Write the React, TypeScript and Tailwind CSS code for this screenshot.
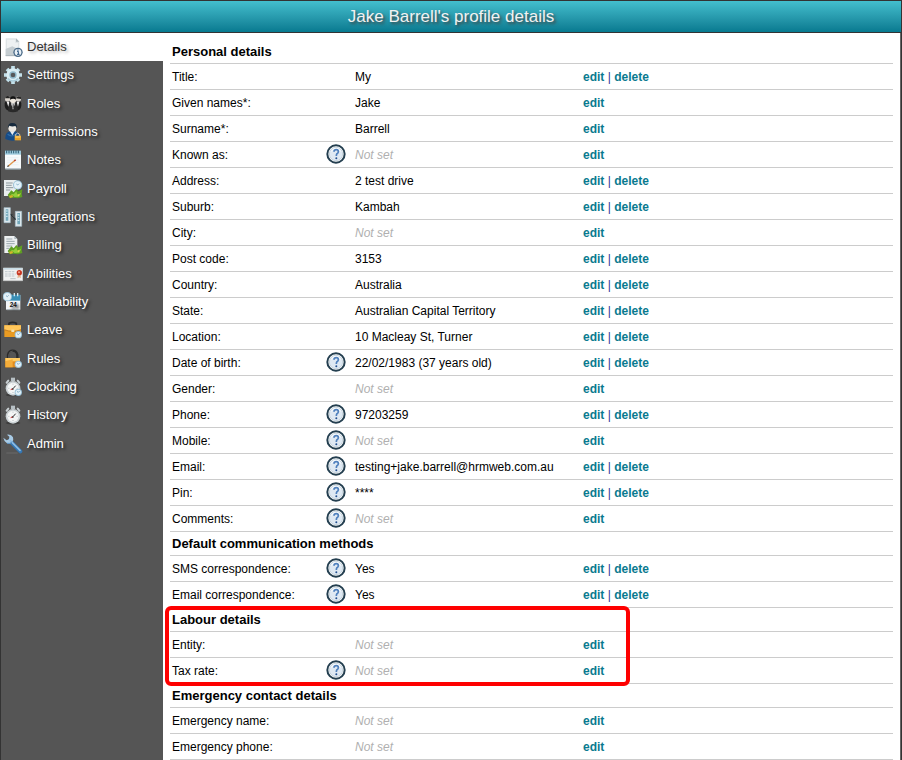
import { ReactNode } from 'react';
import clsx from 'clsx';

interface Field {
  label: string;
  value?: string;
  required?: boolean;
  help?: boolean;
  canDelete?: boolean;
}

interface Section {
  title: string;
  highlighted?: boolean;
  fields: Field[];
}

const sections: Section[] = [
  {
    title: 'Personal details',
    fields: [
      { label: 'Title', value: 'My', canDelete: true },
      { label: 'Given names', value: 'Jake', required: true },
      { label: 'Surname', value: 'Barrell', required: true },
      { label: 'Known as', help: true },
      { label: 'Address', value: '2 test drive', canDelete: true },
      { label: 'Suburb', value: 'Kambah', canDelete: true },
      { label: 'City' },
      { label: 'Post code', value: '3153', canDelete: true },
      { label: 'Country', value: 'Australia', canDelete: true },
      { label: 'State', value: 'Australian Capital Territory', canDelete: true },
      { label: 'Location', value: '10 Macleay St, Turner', canDelete: true },
      { label: 'Date of birth', value: '22/02/1983 (37 years old)', help: true, canDelete: true },
      { label: 'Gender' },
      { label: 'Phone', value: '97203259', help: true, canDelete: true },
      { label: 'Mobile', help: true },
      { label: 'Email', value: 'testing+jake.barrell@hrmweb.com.au', help: true, canDelete: true },
      { label: 'Pin', value: '****', help: true, canDelete: true },
      { label: 'Comments', help: true },
    ],
  },
  {
    title: 'Default communication methods',
    fields: [
      { label: 'SMS correspondence', value: 'Yes', help: true, canDelete: true },
      { label: 'Email correspondence', value: 'Yes', help: true, canDelete: true },
    ],
  },
  {
    title: 'Labour details',
    highlighted: true,
    fields: [{ label: 'Entity' }, { label: 'Tax rate', help: true }],
  },
  {
    title: 'Emergency contact details',
    fields: [{ label: 'Emergency name' }, { label: 'Emergency phone' }],
  },
];

/* Small clock overlay used by several icons */
function MiniClock({ x, y, r = 11 }: { x: number; y: number; r?: number }) {
  return (
    <g>
      <circle cx={x} cy={y} r={r} fill="#9dc3d8" />
      <circle cx={x} cy={y} r={r - 3} fill="#e3f1f8" />
      <path d={`M${x - 4} ${y - 3}L${x} ${y}L${x + 4} ${y - 4}`} fill="none" stroke="#5b8fae" strokeWidth="2" />
    </g>
  );
}

function Stopwatch() {
  return (
    <g>
      <ellipse cx="30" cy="54" rx="22" ry="4" fill="#3d3d3d" />
      <path d="M11 17l5-6M49 17l-5-6" stroke="#c9d0d3" strokeWidth="6" strokeLinecap="round" />
      <path d="M24 2h12v10H24z" fill="#b7c0c4" />
      <circle cx="30" cy="34" r="22" fill="#cbd2d5" />
      <circle cx="30" cy="34" r="17" fill="#f4f6f6" />
      <path d="M30 20v3M30 45v3M16 34h3M41 34h3" stroke="#9aa5aa" strokeWidth="2" />
      <path d="M30 35l8-9" stroke="#333" strokeWidth="3" />
      <circle cx="29" cy="36" r="3" fill="#4b4b4b" />
      <path d="M28 36l-5 2" stroke="#d33" strokeWidth="3" />
    </g>
  );
}

function Leaves() {
  return (
    <g>
      <path d="M14 48l11-14 7 6 8-10 6 7 12-6-2 14 2 9-14 4-12-2-12 2z" fill="#5f9f22" />
      <path d="M22 44l10 2 8-9 3 11 12-7-6 12-14 1z" fill="#94cf38" />
      <path d="M18 50l10-2 2 6-9 3z" fill="#d7b32c" />
      <path d="M42 47l8-2-3 7z" fill="#e9d24a" />
    </g>
  );
}

const icons: Record<string, ReactNode> = {
  Details: (
    <>
      <path d="M8 4h31l10 10v42H8z" fill="#dfe4e6" />
      <path d="M12 8h25v10h8v16H12z" fill="#eef1f2" />
      <path d="M8 36l20-8 21 10v18H8z" fill="#c5cdd1" />
      <path d="M39 4v10h10z" fill="#aeb8bd" />
      <path d="M8 56h30" stroke="#a9b4b9" strokeWidth="3" />
      <circle cx="45" cy="46" r="14" fill="#4b6b88" />
      <circle cx="45" cy="46" r="10" fill="#e9f0f6" />
      <path d="M42 43h4v9M42 52h8" fill="none" stroke="#29537f" strokeWidth="3" />
      <circle cx="45" cy="39" r="2" fill="#29537f" />
    </>
  ),
  Settings: (
    <>
      <g stroke="#c3e0ea" strokeWidth="11">
        <path d="M30 3v54M3 30h54M12 12l36 36M48 12L12 48" />
      </g>
      <circle cx="30" cy="30" r="20" fill="#d9edf4" />
      <path d="M15 40a18 18 0 0 0 30 0" fill="none" stroke="#a5cbda" strokeWidth="4" />
      <circle cx="30" cy="30" r="11" fill="#8fb8c9" />
      <circle cx="30" cy="30" r="7" fill="#55585a" />
    </>
  ),
  Roles: (
    <>
      <path d="M5 28q1-9 12-8l8 6v23H13q-9-5-8-21zM55 28q-1-9-12-8l-8 6v23h12q9-5 8-21z" fill="#1d1d1d" />
      <path d="M17 32q2-8 13-8t13 8l2 20q-15 6-30 0z" fill="#292929" />
      <circle cx="14" cy="15" r="8" fill="#d9d4cd" />
      <circle cx="46" cy="15" r="8" fill="#d9d4cd" />
      <path d="M6 13q2-9 10-7l7 7zM38 13q7-11 16-3v5z" fill="#242424" />
      <path d="M11 23h8l-3 15zM41 23h8l-4 15z" fill="#eee" />
      <circle cx="30" cy="19" r="9" fill="#eee8df" />
      <path d="M21 17q0-11 10-10 8 1 8 10-8-5-18 0z" fill="#111" />
      <path d="M24 28h12l-6 19z" fill="#fff" />
      <path d="M29 29h3l1 11-3 4-2-4z" fill="#555" />
    </>
  ),
  Permissions: (
    <>
      <path d="M7 47q0-16 15-19h13q13 4 14 18v6q-21 9-42-1z" fill="#164c88" />
      <path d="M14 37q12 10 26-1" stroke="#2f6ca8" strokeWidth="4" fill="none" />
      <path d="M21 28h14l-7 12z" fill="#e7edf2" />
      <circle cx="28" cy="18" r="12" fill="#ece8e2" />
      <path d="M15 19Q14 3 28 3q15 0 14 16l-5-7q-10 3-18-1z" fill="#172a3d" />
      <path d="M38 42v-5q6-7 12 0v5" fill="none" stroke="#c7c7c7" strokeWidth="3" />
      <path d="M35 41h19v14H35z" fill="#eaa32b" />
      <path d="M37 43h15v4H37z" fill="#ffd067" />
    </>
  ),
  Notes: (
    <>
      <path d="M6 5h48v51H6z" fill="#f7fafb" />
      <path d="M6 2h48v12H6z" fill="#9dcbdd" />
      <path d="M11 1v9M18 1v9M25 1v9M32 1v9M39 1v9M46 1v9" stroke="#315d72" strokeWidth="3" />
      <path d="M12 23h35M12 30h35M12 37h35M12 44h35" stroke="#e6eff3" strokeWidth="2" />
      <path d="M7 57h46" stroke="#b2c7d0" strokeWidth="3" />
      <path d="M16 48l21-18" stroke="#e0964c" strokeWidth="4" />
      <path d="M34 33l4-4" stroke="#b63d30" strokeWidth="4" />
      <path d="M12 51l3-6 4 4z" fill="#333" />
    </>
  ),
  Payroll: (
    <>
      <path d="M3 3h38v48H3z" fill="#e9edee" />
      <path d="M9 12h20M9 19h17M9 26h22M9 33h13" stroke="#8b979c" strokeWidth="3" />
      <MiniClock x={44} y={18} r={14} />
      <Leaves />
    </>
  ),
  Integrations: (
    <>
      <path d="M3 2h19v45H3zM37 13h19v45H37z" fill="#dce8ed" stroke="#a8bec8" strokeWidth="2" />
      <path d="M8 7h8v34H8zM43 18h8v34h-8z" fill="#73a8bb" />
      <path d="M9 12h5M9 20h5M9 28h5M44 24h5M44 32h5M44 40h5" stroke="#d9edf4" strokeWidth="3" />
      <path d="M24 24l6 6 7 6" fill="none" stroke="#293438" strokeWidth="3" />
      <path d="M22 20l8 3-5 5zM39 39l-8-3 5-5z" fill="#293438" />
    </>
  ),
  Billing: (
    <>
      <path d="M4 3h30l9 9v42H4z" fill="#edf0f1" />
      <path d="M34 3v9h9z" fill="#aeb9be" />
      <path d="M10 12h18M10 19h25M10 26h25M10 33h18M10 40h10" stroke="#9ba7ac" strokeWidth="3" />
      <Leaves />
    </>
  ),
  Abilities: (
    <>
      <path d="M1 12h58v38H1z" fill="#f0f1f1" stroke="#d2d5d5" strokeWidth="2" />
      <path d="M2 12h56v5H2z" fill="#c9dce5" />
      <path d="M6 23h29M6 30h32M6 36h28" stroke="#a8b4ba" strokeWidth="2" strokeDasharray="8 2" />
      <path d="M22 44h16" stroke="#bac2c5" strokeWidth="3" />
      <path d="M45 30l-2 13 6-3 5 3-2-13z" fill="#e3b894" />
      <circle cx="49" cy="26" r="8" fill="#c73723" />
      <circle cx="48" cy="25" r="3" fill="#f2a28c" />
    </>
  ),
  Availability: (
    <>
      <path d="M9 9h43v44H9z" fill="#f3f6f8" />
      <path d="M9 8h43v18H9z" fill="#398eb5" />
      <path d="M34 3v10M44 3v10" stroke="#d5e7ef" strokeWidth="4" />
      <MiniClock x={13} y={14} r={14} />
      <path d="M11 53h40" stroke="#a9b6bc" strokeWidth="3" />
      <text x="31" y="46" textAnchor="middle" fontFamily="Liberation Sans, sans-serif" fontWeight="700" fontSize="19" fill="#111">24</text>
    </>
  ),
  Leave: (
    <>
      <path d="M18 17v-7q11-6 22 0v7" fill="none" stroke="#292929" strokeWidth="5" />
      <path d="M4 16h50v35H4z" fill="#e99b22" />
      <path d="M4 16h50v13q-25 8-50 0z" fill="#ffc65a" />
      <path d="M4 29q25 10 50 0" fill="none" stroke="#a96716" strokeWidth="2" />
      <path d="M25 29h9v7h-9z" fill="#f5e4b3" />
      <MiniClock x={46} y={44} />
    </>
  ),
  Rules: (
    <>
      <path d="M15 30V17q3-12 14-12t14 12v13" fill="none" stroke="#2b2b2b" strokeWidth="7" />
      <path d="M17 27V18q2-12 12-12" fill="none" stroke="#6c6c6c" strokeWidth="2" />
      <path d="M7 27h44v28H7z" fill="#e38c1c" />
      <path d="M7 27h44v10H7z" fill="#ffcb63" />
      <path d="M7 37l22-6v24H7z" fill="#f4ad3a" />
      <MiniClock x={46} y={46} />
    </>
  ),
  Clocking: (
    <>
      <Stopwatch />
      <MiniClock x={46} y={46} />
    </>
  ),
  History: <Stopwatch />,
  Admin: (
    <>
      <path d="M10 57h34" stroke="#6a6a6a" strokeWidth="3" />
      <path d="M20 20l32 32" stroke="#3477b5" strokeWidth="12" strokeLinecap="round" />
      <path d="M1 11l10 8 7-3 1-8L12 2q13-2 18 8 3 9-3 15-7 6-15 3Q3 23 1 11z" fill="#a8cbe6" />
      <path d="M22 20l29 29" stroke="#8dbbe1" strokeWidth="5" strokeLinecap="round" />
      <path d="M12 28q9 2 15-4" fill="none" stroke="#5a93c5" strokeWidth="3" />
    </>
  ),
};

const menu = Object.keys(icons);

function HelpIcon() {
  return (
    <svg viewBox="0 0 60 60" className="block size-5">
      <circle cx="30" cy="30" r="26" fill="#fff" stroke="#243f50" strokeWidth="6" />
      <circle cx="30" cy="30" r="20" fill="#dfe9f3" stroke="#b4c5d1" strokeWidth="2" />
      <path d="M13 25q17-14 34 0-5-14-17-14T13 25z" fill="#f8fbfd" />
      <path d="M24 23q0-6 7-6 6 0 6 6 0 4-4 6-2 2-2 7" fill="none" stroke="#4f80bd" strokeWidth="5" />
      <circle cx="31" cy="43" r="3" fill="#23508f" />
    </svg>
  );
}

function Sidebar() {
  return (
    <nav className="w-[162px] shrink-0 bg-[#555]">
      <ul className="grid h-[425px] auto-rows-fr">
        {menu.map((name, i) => (
          <li key={name} className={clsx('flex', i === 0 && 'bg-white')}>
            <a
              href="#"
              className={clsx(
                'flex flex-1 items-center gap-1 pl-[2px] text-[13px] leading-4',
                i === 0
                  ? 'text-[#333] [text-shadow:2px_2px_3px_#bbb]'
                  : 'text-white [text-shadow:2px_2px_3px_#222]',
              )}
            >
              <svg viewBox="0 0 60 60" className="size-5 shrink-0">{icons[name]}</svg>
              {name}
            </a>
          </li>
        ))}
      </ul>
    </nav>
  );
}

function FieldRow({ field }: { field: Field }) {
  return (
    <tr className="[&>*]:h-[26px] [&>*]:border-b [&>*]:border-[#ccc]">
      <th scope="row" className="pl-[2px] text-left font-normal">
        {field.label}
        {field.required && '*'}:
      </th>
      <td className="pb-[2px]">
        {field.help && (
          <button type="button" aria-label={`Help: ${field.label}`} className="block">
            <HelpIcon />
          </button>
        )}
      </td>
      <td className="whitespace-nowrap">
        {field.value ?? <em className="text-[#b0b0b0]">Not set</em>}
      </td>
      <td className="whitespace-nowrap text-[#333399]">
        <a href="#" className="font-bold text-[#0a7a8f]">edit</a>
        {field.canDelete && (
          <>
            {' | '}
            <a href="#" className="font-bold text-[#0a7a8f]">delete</a>
          </>
        )}
      </td>
    </tr>
  );
}

function DetailSection({ section }: { section: Section }) {
  return (
    <section className="relative">
      <h2 className="h-6 border-b border-[#ccc] pl-[2px] text-[13px] leading-6 font-bold">{section.title}</h2>
      <table className="w-full table-fixed border-separate border-spacing-0 text-xs">
        <colgroup>
          <col className="w-[156px]" />
          <col className="w-[29px]" />
          <col className="w-[228px]" />
          <col />
        </colgroup>
        <tbody>
          {section.fields.map((field) => (
            <FieldRow key={field.label} field={field} />
          ))}
        </tbody>
      </table>
      {section.highlighted && (
        <div className="pointer-events-none absolute -top-[2px] -bottom-[2px] -left-[5px] w-[465px] rounded-md border-4 border-[#fe0000]" />
      )}
    </section>
  );
}

export default function App() {
  return (
    <div className="flex min-h-screen flex-col border-x border-t border-[#333] bg-white font-['Liberation_Sans',Arial,sans-serif] text-black">
      <header className="border-b border-[#333] bg-linear-to-b from-[#43bfce] to-[#067a90]">
        <h1 className="text-center text-[17px] leading-[31px] text-[#f2f2f2] [text-shadow:2px_2px_3px_#444]">
          Jake Barrell's profile details
        </h1>
      </header>
      <div className="flex flex-1 border-r border-[#666]">
        <Sidebar />
        <main className="min-w-0 flex-1 px-[7px] pt-[7px]">
          {sections.map((section) => (
            <DetailSection key={section.title} section={section} />
          ))}
        </main>
      </div>
    </div>
  );
}
